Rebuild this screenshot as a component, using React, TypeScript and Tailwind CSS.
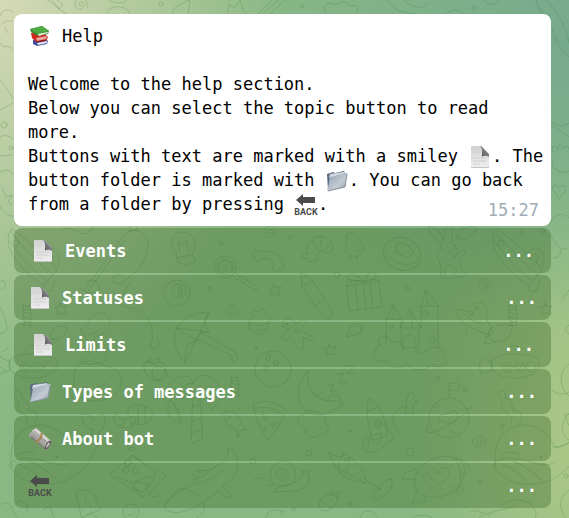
import type { ReactNode } from "react";

function Spiral({ x, y }: { x: number; y: number }) {
  return (
    <path
      transform={`translate(${x} ${y})`}
      d="M6 4C7-2 4-7-1-6C-6-5-8 1-4 4C-1 7 4 4 3 0C2-3-2-3-2 0C-2 2 0 2 1 1"
    />
  );
}

function Star({ x, y }: { x: number; y: number }) {
  return (
    <path
      transform={`translate(${x} ${y})`}
      d="M-1-6L1-2L6-3L3 1L5 5L0 4L-4 6L-3 1L-6-2L-2-2Z"
    />
  );
}

function Boat({ x }: { x: number }) {
  return (
    <path
      transform={`translate(${x} 228)`}
      d="M5 1C-3 8 2 25 12 36C20 46 31 55 37 57L50 42C46 33 22 13 5 1ZM2 12C10 26 28 44 40 53M5 5C14 18 33 36 46 47M12 15a3 3 0 1 1-6 0a3 3 0 0 1 6 0M32 27L42 20C50 18 54 30 51 38M38 32C36 27 44 24 46 29L44 36M37 57C34 62 39 66 44 63L48 52"
    />
  );
}

function Submarine({ x }: { x: number }) {
  return (
    <path
      transform={`translate(${x} 345)`}
      d="M4 15C10 7 44 7 50 15C56 24 44 33 27 33C9 33-1 24 4 15ZM18 8C18 2 24 0 30 1V8M-6 12L4 17V25L-7 29C-9 23-9 17-6 12M14 22a5 5 0 1 0 10 0a5 5 0 0 0-10 0M26 22a5 5 0 1 0 10 0a5 5 0 0 0-10 0M38 22a5 5 0 1 0 10 0a5 5 0 0 0-10 0M17 22a2 2 0 1 0 4 0a2 2 0 0 0-4 0M29 22a2 2 0 1 0 4 0a2 2 0 0 0-4 0"
    />
  );
}

function Whale({ x }: { x: number }) {
  return (
    <g transform={`translate(${x} 0)`}>
      <path d="M3 468C-2 440 12 424 34 425C50 427 57 438 62 447C73 447 83 440 84 429C78 430 74 425 72 414C78 413 82 415 84 421C87 416 92 414 95 415C98 424 94 430 90 432C88 460 68 480 45 484C25 486 10 481 0 465C4 456 22 457 38 462C50 466 56 466 62 462M8 464C22 468 30 477 36 483M20 461C32 466 43 474 50 482M8 455C14 451 22 451 26 455" />
      <path d="M18 424C22 414 8 412 8 406C14 402 4 398 5 393C8 388 14 392 12 398C22 400 18 409 20 411C30 409 30 420 25 425" />
      <circle cx="48" cy="457" r="1" />
    </g>
  );
}

function Candy({ x, y }: { x: number; y: number }) {
  return (
    <path
      transform={`translate(${x} ${y})`}
      d="M-3-5L-5-10L0-8L3-10L3-5C5 0 4 5 3 7L4 11L0 10L-4 11L-2 7C-5 2-4-2-3-5ZM-3-3L3-1M-4 1L3 4M-2-6L3-5M-2 6L3 7"
    />
  );
}

function Wallpaper() {
  return (
    <svg
      aria-hidden="true"
      className="absolute inset-0 h-full w-full"
      viewBox="0 0 569 518"
      preserveAspectRatio="xMidYMid slice"
      fill="none"
      stroke="#3d7d3f"
      strokeOpacity="0.25"
      strokeWidth="1"
      strokeLinecap="round"
      strokeLinejoin="round"
    >
      {/* top edge */}
      <path d="M48 0L66 14M52 0L59 9L63 5L57 0M107 13C108 5 127 4 129 13M109 0C112 4 125 4 127 0M173 14C172 5 184 4 189 0M190 0L188 14M228 14L229 4L234 8L240 0L243 10L246 14M258 14L272 0M263 14L278 0M270 14L284 1M326 14C320 4 331 1 336 5C342-1 349 2 350 6C357 4 360 9 356 14M388 0C391 9 402 13 415 14M404 0C410 8 425 10 428 3M446 14C452 8 462 10 464 14M483 0C488 6 498 5 500 0M536 0C541 18 554 42 569 57M546 0C556 8 567 28 569 43M541 8L558 41" />
      <Spiral x={81} y={4} />
      <circle cx="161" cy="4" r="2" />
      <circle cx="302" cy="6" r="2" />
      <circle cx="474" cy="8" r="2" />
      {/* left edge */}
      <path d="M0 16C2 9 9 8 13 12M2 24C7 18 10 23 13 21M0 43C4 50 9 44 13 49M5 28L8 33M0 80C6 87 10 93 13 99M0 110L13 103M0 137C4 134 10 136 13 139M0 156L13 155M0 172C6 169 11 170 13 174M0 206C3 213 9 216 13 216M2 188L6 197L12 195L8 202L12 205M0 281C7 278 7 289 2 289M0 307C4 317 10 328 5 332L0 334M2 352L8 348M0 366L6 372" />
      <circle cx="11" cy="148" r="2" />
      <circle cx="4" cy="125" r="3" />
      {/* right edge */}
      <path d="M552 125L569 137M552 122C558 127 564 127 569 123M553 152C549 147 557 143 558 150C557 143 563 143 563 149C565 145 569 146 569 149M552 161C552 171 562 174 569 171M555 193C548 185 556 183 559 188C563 182 569 188 564 193L559 199L555 193M551 222C556 212 565 213 569 218M551 235C555 244 560 250 566 249M553 258C559 259 562 252 560 249M562 300L569 290M569 325C564 327 565 333 569 334M552 390C556 394 563 396 569 392M569 364C559 371 558 386 569 396M569 414C560 420 560 436 569 440M552 446C557 450 565 445 569 442M569 490C558 496 559 512 566 518" />
      <circle cx="566" cy="476" r="2" />
      <circle cx="543" cy="231" r="2" />
      {/* sailing, guitar and sky */}
      <Boat x={7} />
      <Boat x={492} />
      <path d="M84 291L122 238C132 224 149 231 148 246C147 262 136 273 128 278C122 286 112 285 112 279C115 273 123 273 124 278M87 293L124 241M87 281C93 278 100 282 99 289C93 296 84 292 80 288M62 230C70 222 86 242 90 230C96 229 96 220 88 218M130 282C118 302 117 304 129 308C143 309 150 317 152 331C154 340 149 347 151 348C158 350 162 343 157 338" />
      <path d="M178 262L176 252C168 244 172 232 183 232C195 233 198 245 192 254L196 262L186 265ZM177 258L193 254M180 252L178 242L183 245L187 240L188 252" />
      <circle cx="225" cy="267" r="11" />
      <circle cx="225" cy="267" r="8" />
      <Spiral x={225} y={267} />
      <path d="M233 276L253 289C257 292 259 288 256 286L235 273" />
      <path d="M254 258C250 252 256 249 259 252C265 250 283 252 282 263C286 268 282 273 278 270C274 273 270 269 274 265C272 258 265 257 261 259C259 263 255 262 254 258Z" />
      <path d="M307 253C306 240 316 234 325 237C335 242 335 253 328 253C322 249 318 251 316 255C320 259 316 263 313 260C309 265 306 261 307 258C300 260 300 254 307 253ZM313 241L317 249M322 236L320 248M331 243L324 250" />
      <path d="M347 238C346 231 357 231 358 238C359 243 365 245 364 250C362 258 348 259 346 250C344 247 348 243 347 238ZM344 238L347 236M350 256V260M357 256V260M354 249C357 254 362 251 363 247" />
      <ellipse cx="402" cy="254" rx="19" ry="16" transform="rotate(20 402 254)" />
      <ellipse cx="404" cy="250" rx="9" ry="6" transform="rotate(30 404 250)" />
      <path d="M385 254C388 262 392 256 397 263C402 260 406 269 411 263C417 266 415 258 420 257M390 245L392 247M397 241L399 243M411 246L413 244M414 254L416 256M394 254L396 252" />
      <path d="M441 244C430 236 426 226 430 226C437 226 441 235 444 241C444 232 445 224 450 226C455 230 451 239 451 243C458 247 459 254 454 258C463 248 467 250 465 253L459 260L462 271C468 273 468 277 462 276C454 279 445 279 441 277C442 268 438 260 437 254L441 250ZM446 276C441 271 447 263 453 266C459 270 456 275 452 276M447 247L449 248M454 245L456 246M448 252C451 255 453 251 453 249M457 238C458 231 462 225 466 229C471 224 477 226 476 231L465 239Z" />
      {/* desk, castle and saucer */}
      <path d="M301 273L302 287L322 316C326 321 334 318 332 311L313 281ZM302 287C307 283 307 284 313 281M313 306C319 304 323 300 325 297M301 278L306 276" />
      <path d="M347 286L379 281L382 307L350 311ZM355 285L358 310M363 284L366 309M370 283L373 308M364 282C353 270 346 272 348 279ZM364 282C368 269 376 269 376 278ZM347 286C346 282 349 280 364 281C376 278 380 280 379 282" />
      <path d="M386 343V319L393 305L402 318L400 328L410 309L421 328V306L426 290L438 305V349M386 319H402M399 328H421M419 306H438M394 306L393 317M411 310L412 327M426 291L428 305M401 329V345M419 329V346M403 349V340C404 333 414 333 416 340V354M380 345C373 334 391 333 391 343C397 338 403 344 403 350C408 345 420 347 421 354C432 343 447 347 443 356C451 362 440 371 432 364C423 373 411 371 408 364C397 371 387 366 387 361C374 364 369 352 380 345" />
      <circle cx="425" cy="314" r="3" />
      <circle cx="432" cy="340" r="3" />
      <circle cx="391" cy="327" r="2" />
      <path d="M456 310C455 318 467 329 491 335C497 332 484 322 487 313C487 300 474 298 468 311ZM465 314C470 322 481 324 487 323M467 330L466 334M485 334L486 338" />
      <circle cx="476" cy="308" r="2" />
      <circle cx="471" cy="313" r="2" />
      <Candy x={513} y={315} />
      <Candy x={27} y={315} />
      <Candy x={235} y={386} />
      <circle cx="177" cy="293" r="13" />
      <circle cx="179" cy="291" r="7" />
      <circle cx="180" cy="289" r="2" />
      <circle cx="180" cy="293" r="2" />
      <path d="M249 325C249 317 254 320 254 316C248 312 254 308 258 312C262 306 267 311 265 315C272 315 271 321 268 322C270 329 265 335 258 334C252 333 248 329 249 325ZM250 323C256 327 264 326 268 322M250 329C257 333 265 330 268 326" />
      <path d="M283 326C280 318 291 315 295 323C300 323 305 317 306 320C306 325 300 328 300 330L312 337C315 340 309 342 303 337C303 344 305 350 301 350C296 349 296 342 291 338C284 342 279 339 282 335L290 329C287 329 284 328 283 326Z" />
      <circle cx="287" cy="324" r="1" />
      <circle cx="296" cy="331" r="2" />
      <circle cx="355" cy="330" r="6" />
      <path d="M349 333C342 340 352 336 359 332C366 327 366 323 360 326" />
      <path d="M177 328C182 317 196 311 209 313C203 318 205 326 209 332C201 332 198 334 198 341C189 340 184 347 185 363C175 352 172 338 177 328ZM177 328L198 341M209 313L200 332L235 352C240 359 235 364 231 359M199 340L230 355C234 357 233 360 231 359M177 328L209 332M185 363L200 332" />
      {/* snake in the pond */}
      <path d="M84 336C77 331 82 325 88 326C90 315 99 310 106 315C115 322 108 331 98 336C90 336 96 343 98 350M84 336C92 342 82 350 90 354M84 357C76 362 84 366 97 363C108 363 110 356 102 354M88 328L89 329M97 325L98 326M84 332C89 335 95 334 98 331" />
      <path d="M52 339C47 330 56 324 67 327C67 334 61 341 52 339ZM52 339L48 347L58 341M489 331C487 340 494 343 500 341C507 343 511 333 513 326C501 323 491 326 489 331ZM489 334L484 344L496 342" />
      <Submarine x={6} />
      <Submarine x={488} />
      {/* fruit, moon and palm */}
      <circle cx="273" cy="369" r="18" />
      <ellipse cx="268" cy="358" rx="2" ry="3" transform="rotate(30 268 358)" />
      <ellipse cx="276" cy="363" rx="2" ry="3" transform="rotate(30 276 363)" />
      <ellipse cx="266" cy="368" rx="2" ry="3" />
      <path d="M144 369C142 361 149 359 154 364C161 359 168 364 165 372C163 382 148 384 144 369ZM154 364L147 361L151 358L153 361L159 358L158 362M75 371C80 358 93 359 101 365C112 367 117 367 121 379C123 390 112 400 96 401C79 402 71 389 75 371ZM99 377L100 378M109 375L111 378M96 384C99 388 106 386 108 383" />
      <path d="M308 371C297 383 294 401 306 411C320 421 336 409 343 405C339 399 329 402 324 400C315 398 306 391 308 371ZM312 392L317 396L324 390M329 402C326 397 332 393 339 396L343 405M300 415C294 419 300 427 306 429C304 438 318 440 320 434C329 436 331 424 325 424C327 417 321 411 316 413C311 407 304 411 304 415Z" />
      <path d="M328 386L334 384L331 392L338 391M335 375L344 373L339 383L347 382M344 366H353L347 374L355 373" />
      <path d="M177 397C180 387 187 382 193 384C196 374 208 373 215 380C222 386 223 399 211 411C209 402 203 396 198 394C190 394 183 400 177 397ZM193 395L191 440M199 395C202 410 202 430 202 440L191 443M192 407L199 405M192 421L201 418M191 433L202 430M169 385C180 371 191 375 193 384" />
      <path d="M225 411C221 419 227 427 237 430L238 438L241 430L247 430L241 424C241 416 233 411 225 411ZM225 420L231 417M228 415L229 416" />
      <path d="M253 405C262 399 277 400 286 411C282 422 274 434 267 440C260 429 255 416 253 405ZM254 409C263 405 276 408 284 416M262 414C266 414 269 421 265 420ZM272 424C275 419 279 425 273 428ZM265 427C268 428 267 433 264 431Z" />
      <path d="M370 399C364 402 368 424 372 440L388 436C385 418 379 403 370 399ZM368 411L379 407M371 433L365 438C358 455 373 455 382 447L394 438L386 425M368 446L369 437L382 433L378 445M397 431L392 421L395 412C404 404 409 406 407 409M408 395C407 401 404 401 407 406L405 414L410 412L414 414L413 405L418 402L413 399C417 394 410 390 408 395Z" />
      <circle cx="378" cy="424" r="4" />
      <circle cx="378" cy="424" r="2" />
      <circle cx="449" cy="418" r="20" />
      <path d="M449 398V383L460 384L458 391L449 390M429 423C422 436 431 436 451 423C472 410 476 404 470 408L463 410M439 417C441 412 447 417 452 410C458 410 460 419 454 422C448 425 446 420 439 421ZM432 407C437 410 441 404 436 403M450 431C457 431 454 437 461 433M464 420L469 423" />
      <path d="M114 418C112 412 119 414 120 418C125 421 130 417 134 416C139 423 130 430 122 427C116 426 114 422 114 418ZM124 421L121 427M130 419L132 425M128 415C126 405 138 401 145 407C154 407 154 420 148 422C143 427 136 424 133 422M138 406L138 424M145 407L145 423M170 400C164 410 170 422 182 424C180 414 178 405 170 400ZM174 404L180 420M152 374C149 365 164 364 167 373C168 383 153 384 152 374Z" />
      <Whale x={9} />
      <Whale x={493} />
      {/* bottom band */}
      <path d="M110 474L133 455L156 474L143 497ZM133 455C133 461 164 470 166 476L150 492M122 471L132 462M116 476L131 483L143 497M131 483L151 476M125 463a3 3 0 1 1 6 0a3 3 0 0 1-6 0M123 470a3 3 0 1 1 6 0a3 3 0 0 1-6 0M132 471a3 3 0 1 1 6 0a3 3 0 0 1-6 0M137 482L149 484L143 492L132 489ZM149 494a5 3 0 1 0 10 0a5 3 0 0 0-10 0M129 449a3 2 0 1 0 6 0a3 2 0 0 0-6 0" />
      <path d="M228 450C226 446 232 447 236 456C241 471 231 482 222 486C226 489 235 499 231 497C225 500 221 493 219 490C214 497 205 499 203 503C206 508 203 514 197 518M228 450C230 459 218 468 207 470C193 474 199 478 190 487C179 489 161 504 165 509C176 517 190 510 203 503M193 480C203 476 214 470 217 465M195 484C205 482 220 474 225 468M194 477C190 471 200 469 207 471" />
      <Spiral x={282} y={475} />
      <path d="M273 484C265 470 276 460 285 461C296 464 297 475 294 484M273 484C280 486 286 486 291 484L303 477C299 469 307 469 309 475C311 484 303 489 297 491L274 492C274 488 280 487 291 484M304 474L302 470M307 474L309 470M254 479C258 475 261 482 266 477M265 486C268 483 269 487 272 485" />
      <path d="M328 453C331 456 333 461 334 465L365 483C369 471 349 455 343 454C342 461 337 455 328 453ZM334 465C339 476 354 482 365 483M343 454C337 462 337 468 342 475M350 457L346 475M344 460a2 2 0 1 0 4 0a2 2 0 0 0-4 0M363 478L380 489M380 489C378 482 390 478 391 479M380 489C371 491 372 501 376 500C386 497 396 486 391 479M353 466L354 467M355 473L357 474M360 475L361 476" />
      <path d="M319 505C319 498 326 493 333 495C341 498 336 508 326 511C321 511 319 509 319 505ZM330 495L333 491L334 495L339 491L336 497L340 498M325 502L326 503M331 500L332 501M329 506L330 507" />
      <path d="M415 485C413 474 423 460 440 457C456 454 467 462 464 475C461 490 446 499 429 497C421 496 416 492 415 485ZM454 458C466 473 459 490 457 491M456 459C471 461 473 471 464 475M419 467L405 473L402 480L415 479M417 490L412 504L426 501L424 496M457 485C467 487 465 493 454 493M439 484C431 479 425 476 429 470C433 466 437 471 438 474C439 467 447 465 449 471C450 478 444 482 439 484ZM421 476L425 475M424 483L427 481M450 485L452 488M452 466L449 468M431 489L432 486M440 492V487" />
      <path d="M77 499C71 489 89 486 94 495L101 509L82 518ZM93 515L98 518M92 512L86 515M85 499L86 503M90 504L91 508M82 507L83 510M0 505C6 500 9 504 11 507L20 501L28 505L27 511M11 507L18 518M43 510L50 506L54 518M167 503C174 490 183 486 190 491L198 496M266 518C266 509 278 507 283 514M281 511H286M360 518C361 509 373 508 378 518M413 518C418 514 428 514 432 518M470 512C475 508 478 514 485 512M479 518C482 512 488 516 492 511M500 508C504 498 526 496 534 508C537 512 536 516 535 518M489 515C493 509 505 511 514 506" />
      <circle cx="131" cy="512" r="8" />
      <path d="M127 509L128 510M133 508L134 509M127 514C130 517 134 515 136 511" />
      <Star x={133} y={226} />
      <Star x={275} y={290} />
      <Star x={330} y={350} />
      <Star x={61} y={309} />
      <Star x={546} y={309} />
      <Spiral x={270} y={232} />
      <Spiral x={232} y={311} />
      <Spiral x={485} y={285} />
      <Spiral x={479} y={442} />
      <circle cx="410" cy="452" r="4" />
      <circle cx="221" cy="243" r="2" />
      <circle cx="290" cy="237" r="2" />
      <circle cx="337" cy="275" r="3" />
      <circle cx="210" cy="289" r="2" />
      <circle cx="256" cy="348" r="1" />
      <circle cx="407" cy="288" r="2" />
      <circle cx="522" cy="233" r="2" />
      <circle cx="253" cy="461" r="3" />
      <circle cx="309" cy="453" r="3" />
      <circle cx="350" cy="431" r="1" />
      <circle cx="349" cy="504" r="2" />
      <circle cx="293" cy="509" r="2" />
      <circle cx="480" cy="482" r="2" />
      <circle cx="502" cy="426" r="2" />
      <circle cx="465" cy="390" r="2" />
      <circle cx="437" cy="378" r="2" />
    </svg>
  );
}

function PageIcon() {
  return (
    <svg aria-hidden="true" className="inline-block h-6 w-6 shrink-0" viewBox="0 0 24 24">
      <defs>
        <linearGradient id="sheet" x1="0" y1="0" x2="0" y2="1">
          <stop offset="0" stopColor="#d2d2d2" />
          <stop offset="1" stopColor="#efefef" />
        </linearGradient>
        <linearGradient id="curl" x1="0" y1="1" x2="1" y2="0">
          <stop offset="0" stopColor="#4c4c50" />
          <stop offset="1" stopColor="#a5a5a8" />
        </linearGradient>
      </defs>
      <path d="M3 1H13L21 9V23H3Z" fill="url(#sheet)" />
      <path d="M3 22H21V23H3Z" fill="#c4c4c4" />
      <path d="M12 1C15 4 14 7 14 12C16 10 19 11 21 12V9L13 1Z" fill="url(#curl)" />
      <path d="M5 4H11M5 7H12M5 13H18M5 16H18M5 19H12" stroke="#d0d0d0" strokeWidth="1" />
    </svg>
  );
}

function FolderIcon() {
  return (
    <svg aria-hidden="true" className="inline-block h-6 w-6 shrink-0" viewBox="0 0 24 24">
      <defs>
        <linearGradient id="flap" x1="0" y1="0" x2="1" y2="1">
          <stop offset="0" stopColor="#93a1b3" />
          <stop offset="0.6" stopColor="#c3cad2" />
          <stop offset="1" stopColor="#8793a2" />
        </linearGradient>
      </defs>
      <path d="M2 5L8 3L10 4L19 2L20 5V16L3 21Z" fill="#596b80" />
      <path d="M5 5L19 3L20 6L4 9Z" fill="#d3dae0" />
      <path d="M5 8L10 7L12 6L22 4C23 4 23 5 22 6L20 18L3 22C2 22 2 21 3 19Z" fill="url(#flap)" />
      <path d="M3 22L20 18L22 5" fill="none" stroke="#8793a2" strokeWidth="1" />
    </svg>
  );
}

function NewspaperIcon() {
  return (
    <svg aria-hidden="true" className="inline-block h-6 w-6 shrink-0" viewBox="0 0 24 24">
      <path d="M3 5L8 1L23 14C24 17 20 23 17 23L2 10C1 8 1 6 3 5Z" fill="#a9a7a4" />
      <path d="M4 4L8 1L23 14L20 16Z" fill="#d6d4d1" />
      <path d="M3 8L18 21M6 4L20 16" stroke="#8b8783" strokeWidth="1" fill="none" />
      <path d="M3 10L17 22" stroke="#5c5956" strokeWidth="1" />
      <path d="M13 6C15 9 12 12 8 16" fill="none" stroke="#a5854f" strokeWidth="2" />
      <ellipse cx="20" cy="18" rx="2" ry="5" transform="rotate(32 20 18)" fill="#5f5b58" />
      <ellipse cx="20" cy="18" rx="1" ry="3" transform="rotate(32 20 18)" fill="#c9c6c2" />
    </svg>
  );
}

function BooksIcon() {
  return (
    <svg aria-hidden="true" className="inline-block h-6 w-6 shrink-0" viewBox="0 0 24 24">
      <path d="M5 16L16 14L20 17L19 20L9 22L5 20Z" fill="#3a4f9d" />
      <path d="M9 19L19 17V19L10 21Z" fill="#e6e8ef" />
      <path d="M3 9L15 8L20 13L18 17L8 18L4 14Z" fill="#cf2a20" />
      <path d="M8 14L19 12L18 15L9 17Z" fill="#e9a79f" />
      <path d="M8 18L18 16" stroke="#8d1712" strokeWidth="1" />
      <path d="M2 5L14 2L21 7L20 10L10 12L3 8Z" fill="#3a8a34" />
      <path d="M2 5L14 2L21 7L10 10Z" fill="#4fab43" />
      <path d="M10 10L20 8V9L11 12Z" fill="#e8f0df" />
    </svg>
  );
}

function BackIcon() {
  return (
    <svg role="img" aria-label="Back" className="inline-block h-6 w-6 shrink-0" viewBox="0 0 24 24">
      <path d="M2 7L9 1V4H21V10H9V13Z" fill="#4b4b4b" />
      <text
        x="12"
        y="22"
        textAnchor="middle"
        fill="#4b4b4b"
        className="font-[Roboto,sans-serif] text-[9px] leading-none font-bold"
      >
        BACK
      </text>
    </svg>
  );
}

type Topic = { label: string; icon: ReactNode; inset: string };

const topics: Topic[] = [
  { label: "Events", icon: <PageIcon />, inset: "px-[17px]" },
  { label: "Statuses", icon: <PageIcon />, inset: "px-[14px]" },
  { label: "Limits", icon: <PageIcon />, inset: "px-[17px]" },
  { label: "Types of messages", icon: <FolderIcon />, inset: "px-[14px]" },
  { label: "About bot", icon: <NewspaperIcon />, inset: "px-[14px]" },
  { label: "", icon: <BackIcon />, inset: "px-[14px]" },
];

export default function App() {
  return (
    <div className="relative min-h-screen bg-[#8ab884] bg-[radial-gradient(50%_75%_at_0%_0%,#d6dab6_0%,#d6dab600_100%),radial-gradient(60%_55%_at_100%_8%,#76aa8c_0%,#76aa8c00_100%),radial-gradient(36%_60%_at_108%_85%,#b3cb86_0%,#b3cb8600_100%)] pt-[14px] pr-[18px] pb-[10px] pl-[14px] font-['DejaVu_Sans_Mono',monospace] text-[17px] leading-6">
      <Wallpaper />
      <main className="relative flex flex-col gap-[2px]">
        <article className="relative rounded-lg bg-white py-[10px] pr-1 pl-[14px] text-black">
          <h1 className="flex items-center gap-[10px]">
            <BooksIcon />
            Help
          </h1>
          <p className="mt-6">Welcome to the help section.</p>
          <p className="pr-6">Below you can select the topic button to read more.</p>
          <p className="[&_svg]:-my-1 [&_svg]:align-middle">
            Buttons with text are marked with a smiley <PageIcon />. The button folder is marked with{" "}
            <FolderIcon />. You can go back from a folder by pressing <BackIcon />.
          </p>
          <time className="absolute right-3 bottom-1 text-[#a0acb6]">15:27</time>
        </article>
        {topics.map((topic) => (
          <button
            key={topic.label || "back"}
            type="button"
            className={`flex h-[45px] items-center gap-[10px] rounded-lg bg-[#3e6c2d]/38 text-left font-bold text-white ${topic.inset}`}
          >
            {topic.icon}
            <span className="flex-1">{topic.label}</span>
            <span>...</span>
          </button>
        ))}
      </main>
    </div>
  );
}
